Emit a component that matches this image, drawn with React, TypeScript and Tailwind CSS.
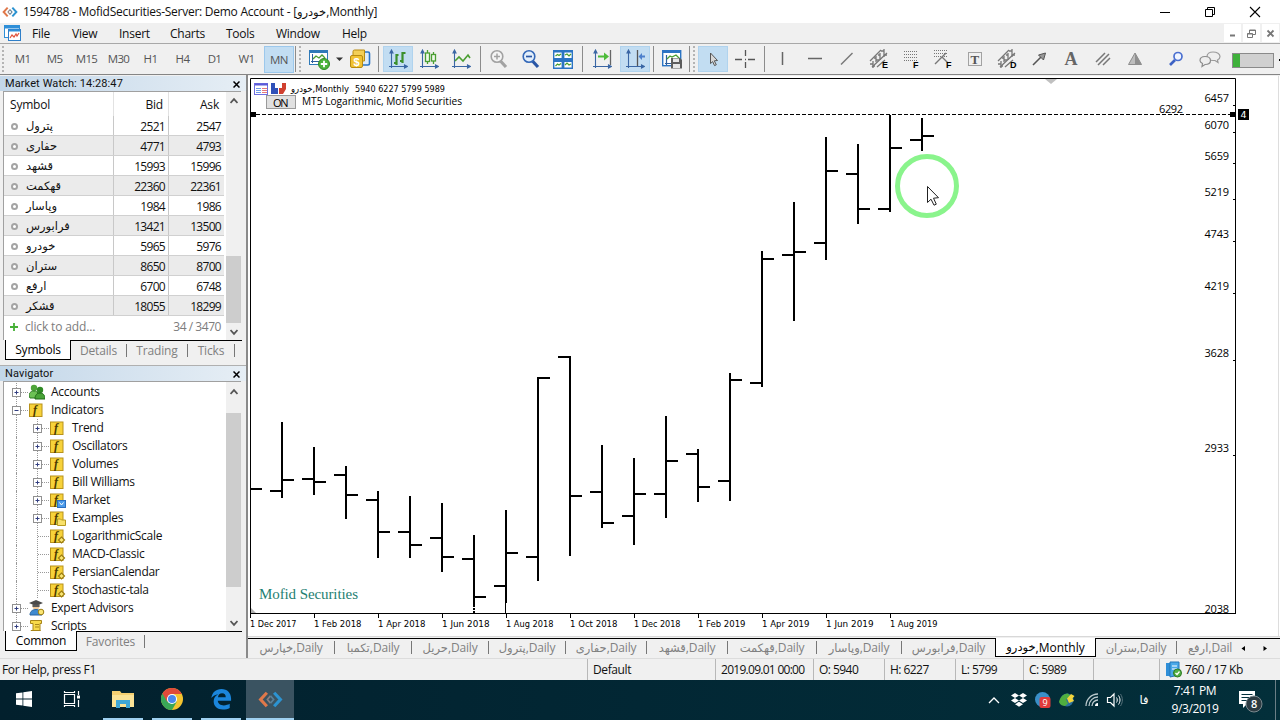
import type { ReactNode } from "react";
import clsx from "clsx";

const quotes = [
  { symbol: "پترول", bid: 2521, ask: 2547 },
  { symbol: "حفاری", bid: 4771, ask: 4793 },
  { symbol: "قشهد", bid: 15993, ask: 15996 },
  { symbol: "قهکمت", bid: 22360, ask: 22361 },
  { symbol: "وپاسار", bid: 1984, ask: 1986 },
  { symbol: "فرابورس", bid: 13421, ask: 13500 },
  { symbol: "خودرو", bid: 5965, ask: 5976 },
  { symbol: "ستران", bid: 8650, ask: 8700 },
  { symbol: "ارفع", bid: 6700, ask: 6748 },
  { symbol: "قشکر", bid: 18055, ask: 18299 },
];

type Badge = "market" | "folder" | "gem";

const indicators: { label: string; badge?: Badge; leaf?: boolean }[] = [
  { label: "Trend" },
  { label: "Oscillators" },
  { label: "Volumes" },
  { label: "Bill Williams" },
  { label: "Market", badge: "market" },
  { label: "Examples", badge: "folder" },
  { label: "LogarithmicScale", badge: "gem", leaf: true },
  { label: "MACD-Classic", badge: "gem", leaf: true },
  { label: "PersianCalendar", badge: "gem", leaf: true },
  { label: "Stochastic-tala", badge: "gem", leaf: true },
];

// x, high, low, open, close in chart pixels
const bars: [number, number, number, number, number][] = [
  [282, 422, 498, 491, 480],
  [314, 447, 495, 479, 482],
  [346, 466, 519, 475, 495],
  [378, 491, 558, 500, 532],
  [410, 496, 558, 532, 545],
  [442, 503, 572, 538, 557],
  [474, 535, 605, 559, 597],
  [506, 510, 603, 586, 553],
  [538, 377, 581, 557, 378],
  [570, 356, 556, 357, 496],
  [602, 445, 528, 492, 523],
  [634, 458, 545, 516, 494],
  [666, 416, 518, 494, 461],
  [698, 449, 502, 454, 487],
  [730, 373, 501, 481, 380],
  [762, 251, 387, 383, 259],
  [794, 202, 321, 255, 252],
  [826, 137, 260, 243, 171],
  [858, 144, 224, 174, 209],
  [890, 115, 212, 209, 148],
  [922, 118, 151, 140, 136],
];

const prices: [number, number][] = [
  [6457, 98],
  [6070, 125],
  [5659, 156],
  [5219, 192],
  [4743, 234],
  [4219, 286],
  [3628, 353],
  [2933, 448],
  [2038, 609],
];

const dates = [
  "1 Dec 2017",
  "1 Feb 2018",
  "1 Apr 2018",
  "1 Jun 2018",
  "1 Aug 2018",
  "1 Oct 2018",
  "1 Dec 2018",
  "1 Feb 2019",
  "1 Apr 2019",
  "1 Jun 2019",
  "1 Aug 2019",
];

const chartTabs = [
  { name: "خپارس", width: "w-[87px]" },
  { name: "تکمبا", width: "w-[77px]" },
  { name: "حریل", width: "w-[77px]" },
  { name: "پترول", width: "w-[77px]" },
  { name: "حفاری", width: "w-[81px]" },
  { name: "قشهد", width: "w-[81px]" },
  { name: "قهکمت", width: "w-[89px]" },
  { name: "وپاسار", width: "w-[85px]" },
  { name: "فرابورس", width: "w-[93px]" },
];

function Fa({ children }: { children: ReactNode }) {
  return <span className="font-['DejaVu_Sans'] text-[11.5px] tracking-normal">{children}</span>;
}

function Icon({ children, size = 20 }: { children: ReactNode; size?: number }) {
  return (
    <svg width={size} height={size} viewBox={`0 0 ${size} ${size}`} fill="none" className="shrink-0">
      {children}
    </svg>
  );
}

function Tool({ children, active, className = "w-8" }: { children: ReactNode; active?: boolean; className?: string }) {
  return (
    <div className={clsx("flex h-full shrink-0 items-center justify-center", className)}>
      <div
        className={clsx(
          "flex h-[26px] w-[30px] items-center justify-center",
          active && "border border-[#b0d3ee] bg-[#c2ddf2]"
        )}
      >
        {children}
      </div>
    </div>
  );
}

function Divider({ className }: { className: string }) {
  return (
    <div className={clsx("flex h-[26px] shrink-0 justify-center", className)}>
      <div className="w-px bg-[#8c8c8c]" />
    </div>
  );
}

function Grip({ className }: { className: string }) {
  return (
    <div className={clsx("flex h-[26px] shrink-0 justify-center", className)}>
      <div className="w-0 border-l-2 border-dotted border-[#b4b4b4]" />
    </div>
  );
}

function Axes() {
  return (
    <path
      d="M3.5 2v17M1 17.5h17M3.5 1 2 4h3zM19.5 17.5l-3-1.5v3z"
      stroke="#3a66a4"
      strokeWidth="1.1"
      fill="#2f5f9e"
    />
  );
}

function Mt5Logo({ size = 16 }: { size?: number }) {
  return (
    <svg width={size} height={size} viewBox="0 0 24 24" fill="none" strokeWidth="3">
      <path d="m8.5 5.5-6 6.500 6 6.500" stroke="#e0784a" />
      <path d="M12 8.500 9 12l3 3.500" stroke="#8a7f80" strokeWidth="1.600" />
      <path d="m12 8.500 3 3.500-3 3.500" stroke="#5c7f96" strokeWidth="1.600" />
      <path d="m15.500 5.500 6 6.500-6 6.500" stroke="#2c93d1" />
    </svg>
  );
}

function TitleBar() {
  return (
    <div className="flex h-[23px] items-center bg-white">
      <div className="ml-0.5 flex w-[21px]">
        <Mt5Logo />
      </div>
      <span className="pt-[2px] text-[12px] tracking-[-0.26px]">
        1594788 - MofidSecurities-Server: Demo Account - [<Fa>خودرو</Fa>,Monthly]
      </span>
      <div className="ml-auto flex items-center gap-[33px] pr-[19px]">
        <Icon size={12}>
          <path d="M1 6.500h10" stroke="#000" />
        </Icon>
        <Icon size={12}>
          <path d="M1.500 3.500h7v7h-7zM3.500 3.500v-2h7v7h-2" stroke="#000" />
        </Icon>
        <Icon size={12}>
          <path d="m1 1 10 10M11 1 1 11" stroke="#000" strokeWidth="1.100" />
        </Icon>
      </div>
    </div>
  );
}

function MenuBar() {
  return (
    <div className="flex h-5 items-center bg-[#f0f0f0] text-[12px] leading-5 tracking-[-0.25px]">
      <div className="ml-1 w-7">
        <Icon size={18}>
          <rect x="0.500" y="1.500" width="15" height="12" fill="#fff" stroke="#2f8fd8" />
          <path d="M0 3h16" stroke="#2f8fd8" strokeWidth="3" />
          <rect x="4.500" y="5.500" width="12" height="11" fill="#fff" stroke="#2f7fc8" />
          <path d="M5 6.500h11" stroke="#2f8fd8" strokeWidth="2" />
          <path d="m6 14 2-3 2 2 2-3 1 2 2-3" stroke="#e0533b" strokeWidth="1.200" />
        </Icon>
      </div>
      <div className="flex pt-[2px]">
        <span className="w-10">File</span>
        <span className="w-[47px]">View</span>
        <span className="w-[51px]">Insert</span>
        <span className="w-14">Charts</span>
        <span className="w-[50px]">Tools</span>
        <span className="w-[66px]">Window</span>
        <span>Help</span>
      </div>
      <div className="ml-auto flex h-[18px] gap-[2px] pr-px">
        <div className="flex w-[17px] items-center justify-center bg-white">
          <Icon size={9}>
            <path d="M2 6.500h5" stroke="#777" strokeWidth="2" />
          </Icon>
        </div>
        <div className="flex w-[17px] items-center justify-center bg-white">
          <Icon size={9}>
            <path d="M.5 4.500h5v4h-5zM2.500 4V1h6v4.500H6M2.500 1.500h6M.5 5h5" stroke="#777" />
          </Icon>
        </div>
        <div className="flex w-[17px] items-center justify-center bg-white">
          <Icon size={9}>
            <path d="m1.500 1.500 6 6M7.500 1.500l-6 6" stroke="#777" strokeWidth="1.800" />
          </Icon>
        </div>
      </div>
    </div>
  );
}

function Strokes({ letter }: { letter: string }) {
  return (
    <svg width="20" height="20" viewBox="0 0 20 20" fill="none" stroke="#777" strokeWidth="1.300">
      <path d="m1 12 11-11M3 18 18 4M8 18l8-7" />
      <path d="M1 15h3M4 12v7M4 17h2M7 7v6M5 9h2M7 11h3M11 4v7M9 6h2M15 0v8M15 6h3M12 2h3" />
      <text x="13" y="19" fill="#000" stroke="none" fontSize="9" fontWeight="900" fontFamily="Liberation Sans">
        {letter}
      </text>
    </svg>
  );
}

function Toolbar() {
  const frames = ["M1", "M5", "M15", "M30", "H1", "H4", "D1", "W1"];
  return (
    <div className="flex h-8 items-center border-y border-t-[#a8a8a8] border-b-[#858585] bg-[#f0f0f0]">
      <Grip className="w-[6px]" />
      {frames.map((frame) => (
        <div key={frame} className="w-8 shrink-0 pl-px text-center text-[11.5px] tracking-[-0.6px] text-[#555]">
          {frame}
        </div>
      ))}
      <div className="ml-[2px] flex h-[27px] w-[30px] shrink-0 items-center justify-center border border-[#9cc8ec] bg-[#c2ddf2] pt-px text-[11.5px] tracking-[-0.6px] text-[#555]">
        MN
      </div>
      <Divider className="w-[3px]" />
      <Grip className="w-[6px]" />
      <Tool>
        <Icon size={22}>
          <rect x="1.500" y="2.500" width="18" height="14" fill="#fff" stroke="#2f7ab8" />
          <path d="M1 4h19" stroke="#2f7ab8" strokeWidth="2" />
          <path d="M4.500 6v9M3 13.500h14" stroke="#2f5f9e" />
          <path d="m5 11 3-3 3 2 3-3 3 3" stroke="#4a9e32" strokeWidth="1.300" />
          <circle cx="16" cy="16" r="5.500" fill="#4db33c" stroke="#2f8a25" />
          <path d="M16 12.800v6.400M12.800 16h6.400" stroke="#fff" strokeWidth="1.800" />
        </Icon>
      </Tool>
      <div className="flex w-[9px] shrink-0 justify-center">
        <Icon size={8}>
          <path d="M0 2.500h7L3.500 6z" fill="#333" />
        </Icon>
      </div>
      <Tool className="w-[31px]">
        <Icon size={22}>
          <rect x="9.500" y="4" width="11" height="13" rx="1.500" fill="#dcecfb" stroke="#2b74c4" strokeWidth="1.600" />
          <path d="M4 7V3.500A1.500 1.500 0 0 1 5.500 2h10v11H5z" fill="#f3cf56" stroke="#b98b10" />
          <rect x="1.500" y="7.500" width="12" height="12" rx="1.500" fill="#f1c232" stroke="#b98b10" />
          <text x="4.500" y="17.500" fontSize="11" fontWeight="700" fill="#fff" fontFamily="Liberation Sans">
            $
          </text>
        </Icon>
      </Tool>
      <Divider className="w-[7px]" />
      <Tool active className="w-[31px]">
        <Icon>
          <Axes />
          <path d="M8.500 5v11M6 14h2M8.500 6h2M14.500 3v11M12 12h2M14.500 4h3" stroke="#3b8f2c" strokeWidth="2.200" />
        </Icon>
      </Tool>
      <Tool>
        <Icon>
          <Axes />
          <path d="M8.500 1v3M8.500 12v3M14.500 3v2M14.500 12v3" stroke="#4a9e32" strokeWidth="1.300" />
          <rect x="6.500" y="4" width="4" height="8.500" fill="#eef8ea" stroke="#4a9e32" strokeWidth="1.300" />
          <rect x="12.500" y="5.500" width="4" height="6.500" fill="#eef8ea" stroke="#4a9e32" strokeWidth="1.300" />
        </Icon>
      </Tool>
      <Tool>
        <Icon>
          <Axes />
          <path d="m4 12 4-4 4 4 5-6 2 3" stroke="#4a9e32" strokeWidth="1.600" />
        </Icon>
      </Tool>
      <Divider className="w-[6px]" />
      <Tool>
        <Icon>
          <path d="m11.500 12 5.500 6" stroke="#a2a2a2" strokeWidth="3.200" />
          <circle cx="8" cy="7.500" r="5.800" fill="#f4f4f4" stroke="#a2a2a2" strokeWidth="1.600" />
          <path d="M8 4.500v6M5 7.500h6" stroke="#a2a2a2" strokeWidth="1.500" />
        </Icon>
      </Tool>
      <Tool>
        <Icon>
          <path d="m11.500 12 5.500 6" stroke="#2a56a4" strokeWidth="3.200" />
          <circle cx="8" cy="7.500" r="5.800" fill="#e3effb" stroke="#3468b8" strokeWidth="1.600" />
          <path d="M5 7.500h6" stroke="#2a56a4" strokeWidth="1.700" />
        </Icon>
      </Tool>
      <Tool>
        <Icon>
          <path d="M.7 1.700h8.600v8H.7zM10.700 1.700h8.600v8h-8.600zM.7 11.200h8.600v8H.7zM10.700 11.200h8.600v8h-8.600z" fill="#fff" stroke="#2b74c4" strokeWidth="1.400" />
          <path d="M0 2.500h20M0 12h20" stroke="#2b74c4" strokeWidth="2" />
          <path d="m2.500 7 2-1.500 1.500 1L8 5M12 6l2-1 2 2 2-2M2.500 17l2-2 1.500 1L8 14.500M12 16l2-2 2 2 2-1" stroke="#4a9e32" strokeWidth="1.200" />
        </Icon>
      </Tool>
      <Divider className="w-[7px]" />
      <Tool>
        <Icon>
          <Axes />
          <path d="M18.500 1v15" stroke="#666" strokeWidth="1.300" />
          <path d="M6 6.500h6V3.500l5 4-5 4v-3H6z" fill="#4dbb3a" />
        </Icon>
      </Tool>
      <Tool active className="w-[34px]">
        <Icon>
          <Axes />
          <path d="M12.500 1v16" stroke="#555" strokeWidth="1.300" />
          <path d="M20 6.500h-3V4l-3.500 3.500L17 11V8.500h3z" fill="#4d80cc" />
        </Icon>
      </Tool>
      <Divider className="w-[3px]" />
      <Tool className="w-[33px]">
        <Icon>
          <rect x=".7" y="1.700" width="18" height="15" fill="#fff" stroke="#2b74c4" strokeWidth="1.400" />
          <path d="M0 3h19" stroke="#2b74c4" strokeWidth="2" />
          <path d="M4.500 6v10M3 14.500h6" stroke="#2f5f9e" strokeWidth="1.200" />
          <path d="m5 10 3-3 2 1 4-2 4 4" stroke="#4a9e32" strokeWidth="1.300" />
          <path d="M9 9h9l2 2v8.500H9z" fill="#5c5c5c" />
          <path d="M11 9.500h6V13h-6zM11 15h7v4h-7z" fill="#e6e6e6" />
        </Icon>
      </Tool>
      <Divider className="w-[3px]" />
      <Grip className="w-[6px]" />
      <Tool active>
        <Icon>
          <path d="m7.500 4 7 7.500-3.200.3 2 4-1.800.8-1.800-4-2.200 2z" fill="#d8d8d8" stroke="#555" />
        </Icon>
      </Tool>
      <Tool>
        <Icon>
          <path d="M10.500 1v6M10.500 13v6M0 10.500h7M13 10.500h7M10 10.500h1" stroke="#555" strokeWidth="1.300" />
        </Icon>
      </Tool>
      <Divider className="w-[6px]" />
      <Tool>
        <Icon>
          <path d="M9.500 3v13" stroke="#666" strokeWidth="1.500" />
        </Icon>
      </Tool>
      <Tool>
        <Icon>
          <path d="M3 9.500h14" stroke="#666" strokeWidth="1.500" />
        </Icon>
      </Tool>
      <Tool>
        <Icon>
          <path d="M4 15.500 15.500 4" stroke="#777" strokeWidth="1.500" />
        </Icon>
      </Tool>
      <Tool>
        <Strokes letter="E" />
      </Tool>
      <Tool>
        <Icon>
          <path d="M3 2.500h14M3 5.500h14M3 8.500h14M3 11.500h14" stroke="#777" strokeDasharray="1 1" />
          <text x="12" y="19" fill="#000" fontSize="9" fontWeight="900" fontFamily="Liberation Sans">
            F
          </text>
        </Icon>
      </Tool>
      <Tool>
        <Icon>
          <path d="M1 1.500h14M1 4.500h14M1 7.500h14" stroke="#777" strokeDasharray="1 1" />
          <path d="m2 15 7-7 6 6M9 8l4-4" stroke="#777" strokeWidth="1.400" />
          <text x="13" y="19" fill="#000" fontSize="9" fontWeight="900" fontFamily="Liberation Sans">
            F
          </text>
        </Icon>
      </Tool>
      <Tool>
        <Icon>
          <path d="M3.500 3.500h13v13h-13z" stroke="#555" strokeDasharray="1 1" />
          <text x="5.500" y="14.500" fill="#555" fontSize="13" fontWeight="700" fontFamily="Liberation Serif">
            T
          </text>
        </Icon>
      </Tool>
      <Tool>
        <Strokes letter="D" />
      </Tool>
      <Tool>
        <Icon>
          <path d="m4 16 8-8" stroke="#555" strokeWidth="1.600" />
          <path d="m16.500 4-2 7-5-5z" fill="#999" stroke="#555" />
        </Icon>
      </Tool>
      <Tool>
        <Icon>
          <text x="3.500" y="16" fill="#666" fontSize="18" fontWeight="700" fontFamily="Liberation Serif">
            A
          </text>
        </Icon>
      </Tool>
      <Tool>
        <Icon>
          <path d="M3 13 12 4M5 16 16 5M10 16l7-7" stroke="#777" strokeWidth="1.500" />
        </Icon>
      </Tool>
      <Tool>
        <Icon>
          <path d="M10 4 3.500 15.500h13z" fill="#bdbdbd" stroke="#8c8c8c" />
          <path d="m10 4 6.500 11.500H10z" fill="#8f8f8f" />
        </Icon>
      </Tool>
      <Tool className="ml-[9px] w-8">
        <Icon>
          <path d="m9 11-5 5" stroke="#3d62c4" strokeWidth="2.600" />
          <circle cx="12" cy="7.500" r="4" fill="#f0f5ff" stroke="#4a6fd0" strokeWidth="1.700" />
        </Icon>
      </Tool>
      <Tool className="w-[36px]">
        <Icon size={24}>
          <path d="M15 5c4 0 7 2 7 4.500 0 1.500-1 2.800-2.500 3.500l.5 2.500-3-2h-2c-3 0-6-1.500-6-4S11.500 5 15 5z" fill="#eee" stroke="#9a9a9a" strokeWidth="1.200" />
          <path d="M7 9.500c3 0 5.500 1.500 5.500 4s-2.500 4-5.500 4l-3 2 .5-3C3 15.800 2 14.800 2 13.500c0-2.500 2-4 5-4z" fill="#eee" stroke="#8c8c8c" strokeWidth="1.200" />
        </Icon>
      </Tool>
      <div className="mt-0.5 ml-1 h-[15px] w-[42px] shrink-0 border border-[#8a8a8a] bg-[#d0d0d0]">
        <div className="h-full w-[7px] bg-[#3fb13b]" />
      </div>
      <div className="mt-px ml-[5px] h-[2px] w-px bg-black" />
    </div>
  );
}

function PanelTitle({ children }: { children: ReactNode }) {
  return (
    <div className="flex h-[15px] shrink-0 items-center justify-between bg-linear-to-r from-[#c3d7e9] to-[#e6eef5] pt-px pr-[6px] pl-[5px] font-['Roboto'] text-[11px] tracking-[0.1px]">
      <span>{children}</span>
      <Icon size={7}>
        <path d="m.5 .5 6 6M6.500 .5l-6 6" stroke="#000" strokeWidth="1.500" />
      </Icon>
    </div>
  );
}

function Chevron({ up }: { up?: boolean }) {
  return (
    <div className="flex h-[17px] w-full items-center justify-center">
      <Icon size={8}>
        <path d={up ? "M.5 6 4 2.200 7.500 6" : "M.5 2 4 5.800 7.500 2"} stroke="#555" strokeWidth="1.800" />
      </Icon>
    </div>
  );
}

function MarketWatch() {
  return (
    <div className="flex h-[290px] flex-col border-b border-[#b0b0b0]">
      <PanelTitle>Market Watch: 14:28:47</PanelTitle>
      <div className="mr-[5px] ml-[3px] flex h-[249px] shrink-0 border-t border-l border-[#a0a0a0] bg-white text-[12px] tracking-[-0.2px]">
        <div className="flex w-[220px] shrink-0 flex-col">
          <div className="flex h-6 items-center">
            <span className="flex h-full w-[110px] items-center border-r border-[#e2e2e2] pt-px pl-[6px]">Symbol</span>
            <span className="flex h-full w-[55px] items-center justify-end border-r border-[#e2e2e2] pt-px pr-[5px]">
              Bid
            </span>
            <span className="flex w-[55px] justify-end pt-px pr-[5px]">Ask</span>
          </div>
          {quotes.map((quote, i) => (
            <div
              key={quote.symbol}
              className={clsx("flex h-5 items-center border-b border-[#d0d0d0]", i % 2 === 1 && "bg-[#ebebeb]")}
            >
              <span className="flex h-full w-[110px] items-center border-r border-[#c8c8c8] pt-[2px] pl-[7px]">
                <span className="mr-2 h-[7px] w-[7px] rounded-full border-2 border-[#a4a4a4] bg-white" />
                <Fa>{quote.symbol}</Fa>
              </span>
              <span className="flex h-full w-[55px] items-center justify-end border-r border-[#c8c8c8] pt-[2px] pr-[3px] tracking-[-0.7px]">
                {quote.bid}
              </span>
              <span className="flex w-[55px] justify-end pt-[2px] pr-[3px] tracking-[-0.7px]">{quote.ask}</span>
            </div>
          ))}
          <div className="flex h-5 items-center pt-px pr-[3px] pl-[6px] text-[#7c7c7c]">
            <Icon size={8}>
              <path d="M4 0v8M0 4h8" stroke="#45b035" strokeWidth="1.800" />
            </Icon>
            <span className="ml-[7px] tracking-[-0.15px]">click to add...</span>
            <span className="ml-auto tracking-[-0.45px]">34 / 3470</span>
          </div>
        </div>
        <div className="ml-[2px] flex w-[15px] shrink-0 flex-col bg-[#f0f0f0]">
          <Chevron up />
          <div className="mt-[147px] h-[67px] bg-[#cdcdcd]" />
          <Chevron />
        </div>
      </div>
      <div className="mr-[4px] ml-[5px] flex h-[20px] border-t border-black text-[12px] text-[#808080]">
        <div className="-mt-px flex h-[20px] w-[66px] shrink-0 items-center justify-center border border-r-[1.5px] border-t-0 border-black bg-white pt-px tracking-[-0.2px] text-black">
          Symbols
        </div>
        <BottomTab className="w-[56px]">Details</BottomTab>
        <BottomTab className="w-[61px]">Trading</BottomTab>
        <BottomTab className="w-[47px]">Ticks</BottomTab>
      </div>
    </div>
  );
}

function BottomTab({ children, className }: { children: ReactNode; className: string }) {
  return (
    <div className={clsx("flex h-[19px] shrink-0 items-center", className)}>
      <span className="flex-1 text-center whitespace-nowrap tracking-[-0.15px]">{children}</span>
      <span className="h-[13px] w-px bg-[#777]" />
    </div>
  );
}

function Toggle({ open, leaf }: { open?: boolean; leaf?: boolean }) {
  return (
    <svg width="17" height="18" viewBox="0 0 17 18" fill="none" className="shrink-0">
      <path d="M4.500 0v18" stroke="#999" strokeDasharray="1 1" />
      <path d="M5 9.500h11" stroke="#999" strokeDasharray="1 1" />
      {!leaf && <rect x=".5" y="5.500" width="8" height="8" fill="#fff" stroke="#919191" />}
      {!leaf && <path d={open ? "M2.500 9.500h4" : "M2.500 9.500h4M4.500 7.500v4"} stroke="#333f80" />}
    </svg>
  );
}

function IndicatorIcon({ badge }: { badge?: Badge }) {
  return (
    <Icon size={16}>
      <rect x=".5" y="2" width="12.500" height="12.500" fill="#f7d23a" stroke="#b8921a" />
      <text x="4" y="12" fontSize="12" fontWeight="700" fontStyle="italic" fill="#4a3a00" fontFamily="Liberation Serif">
        f
      </text>
      {badge === "market" && (
        <>
          <rect x="7.500" y="8.500" width="8" height="7" fill="#4b9bea" stroke="#2b6fc0" />
          <path d="m9.500 10.500 2 2.500 2-2.500" stroke="#fff" />
        </>
      )}
      {badge === "folder" && <path d="M7.500 9h3l1 1h4v5.500h-8z" fill="#f8e16b" stroke="#b89a20" />}
      {badge === "gem" && <path d="m11.500 9 3 3-3 3-3-3z" fill="#fbe674" stroke="#9c7d10" strokeWidth="1.200" />}
    </Icon>
  );
}

function TreeRow({ icon, label, open }: { icon: ReactNode; label: string; open?: boolean }) {
  return (
    <div className="flex h-[18px] shrink-0 items-center pl-2">
      <Toggle open={open} />
      <div className="w-[22px]">{icon}</div>
      <span>{label}</span>
    </div>
  );
}

function Navigator() {
  return (
    <div className="flex flex-col">
      <PanelTitle>Navigator</PanelTitle>
      <div className="mr-[5px] ml-[3px] flex h-[250px] shrink-0 overflow-hidden border-t border-l border-[#a0a0a0] bg-white text-[12px] tracking-[-0.3px]">
        <div className="flex w-[222px] shrink-0 flex-col pt-px">
          <TreeRow
            label="Accounts"
            icon={
              <Icon size={16}>
                <circle cx="5" cy="4" r="3.200" fill="#4ea53a" />
                <circle cx="11" cy="6" r="3.200" fill="#2f8a25" />
                <path d="M0 12c0-4 3-5 5-5s4 1 5 4l-2 3H1z" fill="#6cc155" stroke="#2d7a22" />
                <path d="M6 15c0-4 2-6 5-6s5 2 5 6z" fill="#48a337" stroke="#1e6a16" />
              </Icon>
            }
          />
          <TreeRow open label="Indicators" icon={<IndicatorIcon />} />
          {indicators.map((item) => (
            <div key={item.label} className="flex h-[18px] shrink-0 items-center pl-3">
              <div className="h-full w-[17px] border-l border-dotted border-[#999]" />
              <Toggle leaf={item.leaf} />
              <div className="w-[22px]">
                <IndicatorIcon badge={item.badge} />
              </div>
              <span>{item.label}</span>
            </div>
          ))}
          <TreeRow
            label="Expert Advisors"
            icon={
              <Icon size={16}>
                <circle cx="7" cy="6" r="3.500" fill="#efc89a" />
                <path d="m0 3 7-3 7 3-7 3z" fill="#4a4a4a" />
                <path d="M3.500 4.500h7V7h-7z" fill="#5a5a5a" />
                <path d="M1 15c0-4 3-5.500 6-5.500s6 2 6 5.500z" fill="#3f8ad0" stroke="#2a65a0" />
                <circle cx="12" cy="12" r="2.800" fill="#fbe674" stroke="#9c7d10" />
              </Icon>
            }
          />
          <TreeRow
            label="Scripts"
            icon={
              <Icon size={16}>
                <path d="M1.500 2.500h11v3H11V13H4V5.500H1.500z" fill="#f7d94a" stroke="#a8861a" />
                <path d="M6 6.500h4M6 9h4" stroke="#a8861a" />
                <path d="M2 12.500h9l3 2.500H4z" fill="#efc62e" stroke="#a8861a" />
              </Icon>
            }
          />
        </div>
        <div className="flex w-[15px] shrink-0 flex-col bg-[#f0f0f0] pt-px">
          <Chevron up />
          <div className="mt-[13px] h-[174px] bg-[#cdcdcd]" />
          <div className="mt-[27px]">
            <Chevron />
          </div>
        </div>
      </div>
      <div className="mr-[4px] ml-[5px] flex h-5 shrink-0 border-t border-black text-[12px] text-[#808080]">
        <div className="-mt-px flex h-5 w-[72px] shrink-0 items-center justify-center border border-r-[1.5px] border-t-0 border-black bg-white pt-px tracking-[-0.2px] text-black">
          Common
        </div>
        <BottomTab className="w-[68px]">Favorites</BottomTab>
      </div>
    </div>
  );
}

function Chart() {
  return (
    <svg width="1032" height="560" viewBox="248 76 1032 560" className="block shrink-0 bg-white">
      <path d="M250.500 613V78.500h985V613.500" fill="none" stroke="#000" />
      <path d="M250 613.500h986" stroke="#000" />
      <path d="M1278.500 76v560" stroke="#ddd" />
      <path d="M1045 79h12l-6 5z" fill="#c0c0c0" />
      <path d="M251 608v5h5z" fill="#b0b0b0" />

      <g fontFamily="Open Sans" fontSize="11">
        {prices.map(([price, y]) => (
          <g key={price}>
            <text x="1229" y={y + 4} textAnchor="end" textLength="24.500">
              {price}
            </text>
            {y < 600 && <path d={`M1233 ${y + 7.5}h3`} stroke="#000" />}
          </g>
        ))}
        <text x="1159" y="113" textLength="24">
          6292
        </text>
      </g>

      {dates.map((date, i) => (
        <g key={date}>
          <path d={`M${250.5 + i * 64} 614v4`} stroke="#000" />
          <text
            x={250 + i * 64}
            y="627"
            fontFamily="DejaVu Sans Condensed, DejaVu Sans"
            fontSize="9.500"
            textLength={i === 0 || i === 6 ? 46.5 : 47.5}
            lengthAdjust="spacingAndGlyphs"
          >
            {date}
          </text>
        </g>
      ))}

      <g stroke="#000" strokeWidth="2">
        <path d="M250 489h12" />
        {bars.map(([x, high, low, open, close]) => (
          <path key={x} fill="none" d={`M${x} ${high}V${low}M${x - 12} ${open}h12M${x} ${close}h12`} />
        ))}
      </g>
      <path d="M474 605v8" stroke="#000" strokeWidth="2" strokeDasharray="2 1" />
      <path d="M505.500 603v10" stroke="#000" />

      {/* resistance line */}
      <path d="M256 114.500h976" stroke="#000" strokeDasharray="4 2" />
      <path d="M250 112h6v5h-6zM1230 112h6v5h-6z" fill="#000" />
      <rect x="1238" y="109" width="11" height="11" fill="#000" />
      <text x="1240.500" y="118" fill="#fff" fontSize="9.500" fontFamily="DejaVu Sans">
        4
      </text>

      {/* legend */}
      <rect x="254.500" y="83.500" width="13" height="11" fill="#fff" stroke="#6f6fe0" />
      <path d="M255 84.500h13" stroke="#5a5ad8" strokeWidth="2" />
      <path d="M256 88.500h5M256 90.500h5M256 92.500h5" stroke="#6f9be8" />
      <path d="M262 88.500h5M262 90.500h5M262 92.500h5" stroke="#e87a7a" />
      <path d="M271 83h4v5h3v6h-7z" fill="#2f50b8" />
      <path d="M279 94v-6h3v-5h4v6l-3 5z" fill="#d0402f" />
      <text x="291" y="92" fontSize="9.500" fontFamily="DejaVu Sans Condensed, DejaVu Sans" textLength="58" lengthAdjust="spacingAndGlyphs">
        خودرو,Monthly
      </text>
      <text x="355" y="92" fontSize="9.500" fontFamily="DejaVu Sans Condensed, DejaVu Sans" textLength="90" lengthAdjust="spacingAndGlyphs">
        5940 6227 5799 5989
      </text>
      <rect x="266.500" y="95.500" width="29" height="13" fill="#e0e0e0" stroke="#9a9a9a" />
      <text x="273" y="107" fontSize="11" fontFamily="Open Sans" textLength="15.500">
        ON
      </text>
      <text x="302" y="105" fontSize="11" fontFamily="Open Sans" textLength="160" lengthAdjust="spacingAndGlyphs">
        MT5 Logarithmic, Mofid Securities
      </text>
      <text x="259" y="599" fontSize="15" fill="#1f7f72" fontFamily="Liberation Serif" textLength="99">
        Mofid Securities
      </text>

      {/* pointer highlight */}
      <circle cx="927" cy="186" r="29.500" fill="none" stroke="#8af48c" strokeWidth="5" />
      <path d="M927.500 186.500v16l3.500-3.300 3 6 2.300-1-2.800-6 5-.5z" fill="#fff" stroke="#222" />
    </svg>
  );
}

function ChartTabs() {
  return (
    <div className="flex h-[22px] border-t border-[#d8d8d8] bg-[#f0f0f0] text-[12px] text-[#808080]">
      <div className="mt-px flex h-[19px] w-full border-t border-black">
        {chartTabs.map((tab, i) => (
          <div key={tab.name} className={clsx("flex h-[19px] shrink-0 items-center", tab.width)}>
            <span className="flex-1 text-center whitespace-nowrap tracking-[-0.2px]">
              <Fa>{tab.name}</Fa>,Daily
            </span>
            {i < chartTabs.length - 1 && <span className="mb-0.5 h-[13px] w-px bg-[#777]" />}
          </div>
        ))}
        <div className="-mt-px flex h-[19px] w-[101px] shrink-0 items-center justify-center border border-t-0 border-black bg-white pt-px whitespace-nowrap text-black">
          <Fa>خودرو</Fa>,Monthly
        </div>
        <div className="flex h-[19px] w-[81px] shrink-0 items-center">
          <span className="flex-1 text-center whitespace-nowrap tracking-[-0.2px]">
            <Fa>ستران</Fa>,Daily
          </span>
          <span className="mb-0.5 h-[13px] w-px bg-[#777]" />
        </div>
        <div className="ml-[11px] flex h-[19px] w-[46px] shrink-0 items-center whitespace-nowrap tracking-[-0.2px]">
          <span>
            <Fa>ارفع</Fa>,Dail
          </span>
        </div>
        <div className="flex h-[18px] items-center gap-[17px] pl-[7px]">
          <Icon size={5}>
            <path d="M4 0v5L.5 2.500z" fill="#000" />
          </Icon>
          <Icon size={5}>
            <path d="M.5 0v5L4 2.500z" fill="#000" />
          </Icon>
        </div>
      </div>
    </div>
  );
}

function StatusCell({ children, className }: { children?: ReactNode; className: string }) {
  return (
    <div className={clsx("flex h-full shrink-0 items-center border-l border-[#b8b8b8] pl-[5px] whitespace-nowrap", className)}>
      {children}
    </div>
  );
}

function StatusBar() {
  return (
    <div className="flex h-[22px] items-center border-t border-[#dcdcdc] bg-[#f0f0f0] text-[12px] tracking-[-0.55px]">
      <span className="w-[587px] shrink-0 pl-[2px] tracking-[-0.35px]">For Help, press F1</span>
      <StatusCell className="w-32 tracking-[-0.4px]">Default</StatusCell>
      <StatusCell className="w-[98px] tracking-[-0.72px]">2019.09.01 00:00</StatusCell>
      <StatusCell className="w-[71px]">O: 5940</StatusCell>
      <StatusCell className="w-[71px]">H: 6227</StatusCell>
      <StatusCell className="w-[68px]">L: 5799</StatusCell>
      <StatusCell className="w-[70px]">C: 5989</StatusCell>
      <StatusCell className="w-[66px]" />
      <StatusCell className="flex-1">
        <Icon size={18}>
          <path d="M1 2h4v13H1z" fill="#2f8fd8" />
          <path d="M5 1h9v13l-9 2z" fill="#4aa8e8" stroke="#2377b8" />
          <path d="M7 5h5M7 8h5" stroke="#fff" />
          <circle cx="12.500" cy="12" r="4" fill="#52b043" stroke="#2f7a25" />
          <path d="m10.500 12 1.500 1.500 2.500-3" stroke="#fff" strokeWidth="1.300" />
        </Icon>
        <span className="ml-[2px] tracking-[-0.45px]">760 / 17 Kb</span>
      </StatusCell>
    </div>
  );
}

function Task({ children, className, line }: { children: ReactNode; className: string; line?: boolean }) {
  return (
    <div className={clsx("flex h-full shrink-0 flex-col items-center", className)}>
      <div className="flex h-[38px] items-center">{children}</div>
      {line && <div className="h-[2px] w-full bg-[#9ed0f0]" />}
    </div>
  );
}

function Taskbar() {
  return (
    <div className="flex h-10 bg-linear-to-r from-[#02202d] via-[#022734] to-[#032f3a] text-white">
      <Task className="w-12">
        <Icon size={16}>
          <path d="M0 2.300 6.500 1.400v6.200H0zM7.300 1.300 16 0v7.600H7.300zM0 8.400h6.500v6.200L0 13.700zM7.300 8.400H16V16l-8.700-1.300z" fill="#fff" />
        </Icon>
      </Task>
      <Task className="w-12">
        <Icon size={18}>
          <path d="M1.500 4.500h10v9h-10zM1.500 3V1M11.500 1v2M1 2.500h11M1.500 15v2M11.500 17v-2M1 15.500h11M15.500 1v4M15.500 10v7" stroke="#fff" strokeWidth="1.200" />
          <path d="M14 5.500h3v3h-3z" fill="#fff" />
        </Icon>
      </Task>
      <Task line className="ml-[7px] w-10">
        <Icon size={22}>
          <path d="M0 3h8l1.500 2H22v14H0z" fill="#f5d071" />
          <path d="M0 7h22v12H0z" fill="#fbe396" />
          <path d="M4 20v-8h14v8h-4v-4H8v4z" fill="#3fa7d6" />
        </Icon>
      </Task>
      <Task line className="ml-[9px] w-10">
        <svg width="22" height="22" viewBox="0 0 24 24">
          <circle cx="12" cy="12" r="12" fill="#f4c430" />
          <path d="M1.600 6A12 12 0 0 0 12 24l5.200-9L12 12z" fill="#3aa757" />
          <path d="M1.600 6 6.800 15 12 12V6.500h10.700l-.3-.5A12 12 0 0 0 1.600 6z" fill="#e04a3a" />
          <circle cx="12" cy="12" r="5.500" fill="#fff" />
          <circle cx="12" cy="12" r="4.400" fill="#4a88ee" />
        </svg>
      </Task>
      <Task line className="ml-[9px] w-10">
        <svg width="22" height="22" viewBox="0 0 24 24" fill="#1b86dc">
          <path d="M1.500 11C2 5 6.500 1 12.500 1 19 1 23 5.500 23 11.500V14H8.500c.2 3.300 3 5 6.500 5 2.500 0 4.700-.7 6.500-1.700v4.500C19.500 23 17 23.500 14 23.500c-6 0-10-3.500-10-9 0-3.500 2-6.300 5-7.700-3 .3-6 2-7.500 4.200zM8.700 10h8.500c0-2.700-1.500-4.300-4-4.300S9 7.500 8.700 10z" />
        </svg>
      </Task>
      <Task line className="ml-[5px] w-12 bg-[#3a5361]">
        <Mt5Logo size={25} />
      </Task>

      <div className="ml-auto flex items-center">
        <div className="mr-[10px] flex">
          <Icon size={14}>
            <path d="m2 10 5-5 5 5" stroke="#fff" strokeWidth="1.300" />
          </Icon>
        </div>
        <div className="mr-2 flex">
          <Icon size={16}>
            <path d="M4 1 8 3.500 4 6 0 3.500zM12 1l4 2.500L12 6 8 3.500zM4 6l4 2.500L4 11 0 8.500zM12 6l4 2.500-4 2.500-4-2.500zM8 9.800l4 2.400L8 14.700l-4-2.500z" fill="#fff" />
          </Icon>
        </div>
        <div className="mr-2 flex">
          <Icon size={16}>
            <circle cx="7.500" cy="7.500" r="7.500" fill="#3a8fc8" />
            <rect x="4.500" y="5" width="11" height="11" rx="2" fill="#e03a3a" />
            <text x="7.500" y="14" fontSize="9" fill="#fff" fontFamily="Open Sans">
              9
            </text>
          </Icon>
        </div>
        <div className="mr-[9px] flex">
          <Icon size={16}>
            <circle cx="8" cy="8" r="6.500" fill="#2b6f9c" />
            <path d="M0 10C1 5 4 2 9 1.500l2 2-4 4 2 4-3 2.500c-2 0-5-1-6-4z" fill="#4fae3f" />
            <path d="M8 6.500 12 2l3.500 2-2 2.500L15 9l-5 2z" fill="#f2d53c" />
          </Icon>
        </div>
        <div className="mr-[6px] flex">
          <Icon size={16}>
            <path d="M2 14A12 12 0 0 1 14 2M5 14a9 9 0 0 1 9-9M8 14a6 6 0 0 1 6-6" stroke="#b9c8cc" strokeWidth="1.300" />
            <path d="M14 11v3h-3a3 3 0 0 1 3-3z" fill="#fff" />
          </Icon>
        </div>
        <div className="flex">
          <Icon size={18}>
            <path d="M1.500 6.500h3L8 3v12l-3.500-3.500h-3z" stroke="#fff" strokeWidth="1.200" />
            <path d="M10.500 6.500c1 1.500 1 3.500 0 5M12.500 4.500c2 3 2 6 0 9" stroke="#fff" />
            <path d="M14.500 3c2.500 4 2.500 8 0 12" stroke="#56707a" />
          </Icon>
        </div>
        <span className="w-[40px] text-center">
          <Fa>فا</Fa>
        </span>
        <div className="w-[62px] text-center text-[12px] leading-[18px] tracking-[-0.35px]">
          <div>7:41 PM</div>
          <div>9/3/2019</div>
        </div>
        <div className="ml-[12px] flex">
          <Icon size={26}>
            <path d="M1 4h16v13H9l-4 4v-4H1z" fill="#fff" />
            <path d="M3.500 7.500h11M3.500 10.500h11M3.500 13.500h7" stroke="#03303c" />
            <circle cx="16" cy="17" r="8" fill="#2c3b42" stroke="#7c898e" />
            <text x="13" y="21.300" fontSize="11" fontWeight="600" fill="#fff" fontFamily="Open Sans">
              8
            </text>
          </Icon>
        </div>
        <div className="ml-[11px] h-10 w-px bg-[#6a7f86]" />
        <div className="w-[4px]" />
      </div>
    </div>
  );
}

export default function App() {
  return (
    <div className="flex h-[720px] w-[1280px] flex-col overflow-hidden bg-[#f0f0f0] font-['Open_Sans','DejaVu_Sans',sans-serif] text-[12px] text-[#111]">
      <TitleBar />
      <MenuBar />
      <Toolbar />
      <div className="flex h-[583px] shrink-0">
        <div className="flex w-[248px] shrink-0 flex-col border-r-2 border-[#8a8a8a] pt-px">
          <MarketWatch />
          <Navigator />
        </div>
        <div className="flex w-[1032px] shrink-0 flex-col pt-px">
          <Chart />
          <ChartTabs />
        </div>
      </div>
      <StatusBar />
      <Taskbar />
    </div>
  );
}
